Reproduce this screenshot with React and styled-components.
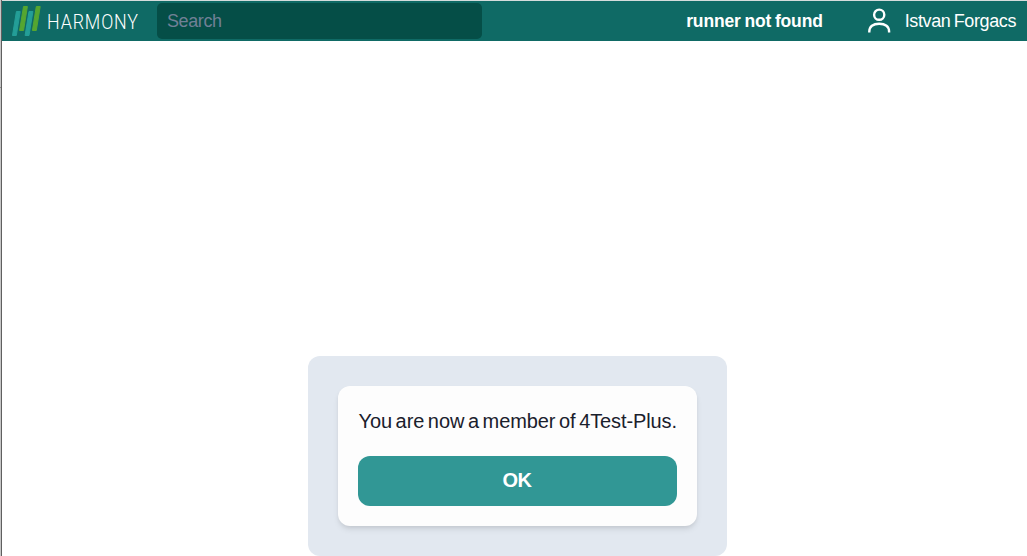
import React from 'react';
import styled, { createGlobalStyle } from 'styled-components';

const GlobalStyle = createGlobalStyle`
  * {
    box-sizing: border-box;
  }
  body {
    margin: 0;
    background: #fff;
    font-family: 'Liberation Sans', Arial, sans-serif;
  }
`;

const Window = styled.div`
  display: flex;
  height: 556px;
  overflow: hidden;
`;

// Thin strip of the window frame on the left
const Edge = styled.div`
  display: flex;
  flex-direction: column;
  width: 2px;
  border-right: 1px solid #5f5f5f;
  background: #c6c6c6;
`;

const EdgeMark = styled.div`
  height: 1px;
  margin-top: 87px;
  background: #8c8c8c;
`;

const Page = styled.div`
  flex: 1;
  display: flex;
  flex-direction: column;
  border-top: 1px solid #d5dcdc;
`;

const Header = styled.header`
  display: flex;
  align-items: center;
  height: 40px;
  padding: 0 11px 0 10px;
  background: #0f6a65;
  color: #fff;
`;

const Brand = styled.div`
  display: flex;
  align-items: center;
  width: 145px;
  gap: 6px;
`;

const BrandName = styled.span`
  padding-top: 1px;
  font-family: Roboto, 'Open Sans', sans-serif;
  font-size: 21px;
  font-weight: 300;
  line-height: 30px;
  letter-spacing: 1px;
  white-space: nowrap;
  transform: scaleX(0.85);
  transform-origin: left center;
`;

const SearchInput = styled.input`
  width: 325px;
  height: 36px;
  padding: 0 10px;
  border: 0;
  border-radius: 5px;
  background: #054e47;
  color: #fff;
  font-family: inherit;
  font-size: 18px;
  letter-spacing: -0.4px;
  outline: none;

  &::placeholder {
    color: #718096;
    opacity: 1;
  }
`;

const Runner = styled.strong`
  margin-left: auto;
  margin-right: 45px;
  font-size: 17.5px;
  letter-spacing: -0.15px;
  word-spacing: -1px;
  white-space: nowrap;
`;

const User = styled.div`
  display: flex;
  align-items: center;
  gap: 13px;
  font-size: 18px;
  letter-spacing: -0.4px;
  word-spacing: -1.2px;
  white-space: nowrap;
`;

const Main = styled.main`
  flex: 1;
  display: flex;
  justify-content: center;
  align-items: flex-start;
  padding: 315px 0 0 5px;
`;

const Panel = styled.section`
  width: 419px;
  padding: 30px;
  border-radius: 12px;
  background: #e2e8f0;
`;

const Card = styled.div`
  display: flex;
  flex-direction: column;
  gap: 20px;
  height: 140px;
  padding: 20px;
  border-radius: 12px;
  background: #fdfdfd;
  box-shadow: 0 4px 6px -1px rgba(0, 0, 0, 0.1), 0 2px 4px -1px rgba(0, 0, 0, 0.06);
`;

const Message = styled.p`
  margin: 0;
  padding-left: 1px;
  color: #1a202c;
  font-size: 20px;
  line-height: 30px;
  letter-spacing: -0.1px;
  word-spacing: -1.8px;
  white-space: nowrap;
`;

const OkButton = styled.button`
  height: 50px;
  padding: 0 0 2px;
  border: 0;
  border-radius: 12px;
  background: #319795;
  color: #fff;
  font-family: inherit;
  font-size: 20px;
  font-weight: 700;
  letter-spacing: -0.4px;
  cursor: pointer;
`;

function Logo() {
  return (
    <svg width="29" height="30" viewBox="0 0 29 30" strokeLinejoin="round">
      <path d="M4.4 5.5H8.2L4.3 29.5H0.5Z" fill="#249e97" stroke="#249e97" />
      <path d="M11.5 0.5H15.4L11.5 24.5H7.6Z" fill="#55a630" stroke="#55a630" />
      <path d="M17 5.5H20.9L17 29.5H13.1Z" fill="#249e97" stroke="#249e97" />
      <path d="M24.3 0.5H28.2L24.3 24.5H20.4Z" fill="#55a630" stroke="#55a630" />
    </svg>
  );
}

function UserIcon() {
  return (
    <svg width="24" height="26" viewBox="0 0 24 26" fill="none" stroke="#fff" strokeWidth="2.4">
      <circle cx="11.2" cy="6.7" r="5.1" />
      <path d="M1.3 24.4V23.5C1.3 18.6 5 15.7 11.2 15.7S21.1 18.6 21.1 23.5V24.4" />
    </svg>
  );
}

export default function App() {
  return (
    <>
      <GlobalStyle />
      <Window>
        <Edge>
          <EdgeMark />
        </Edge>
        <Page>
          <Header>
            <Brand>
              <Logo />
              <BrandName>HARMONY</BrandName>
            </Brand>
            <SearchInput placeholder="Search" />
            <Runner>runner not found</Runner>
            <User>
              <UserIcon />
              <span>Istvan Forgacs</span>
            </User>
          </Header>
          <Main>
            <Panel>
              <Card>
                <Message>You are now a member of 4Test-Plus.</Message>
                <OkButton>OK</OkButton>
              </Card>
            </Panel>
          </Main>
        </Page>
      </Window>
    </>
  );
}
